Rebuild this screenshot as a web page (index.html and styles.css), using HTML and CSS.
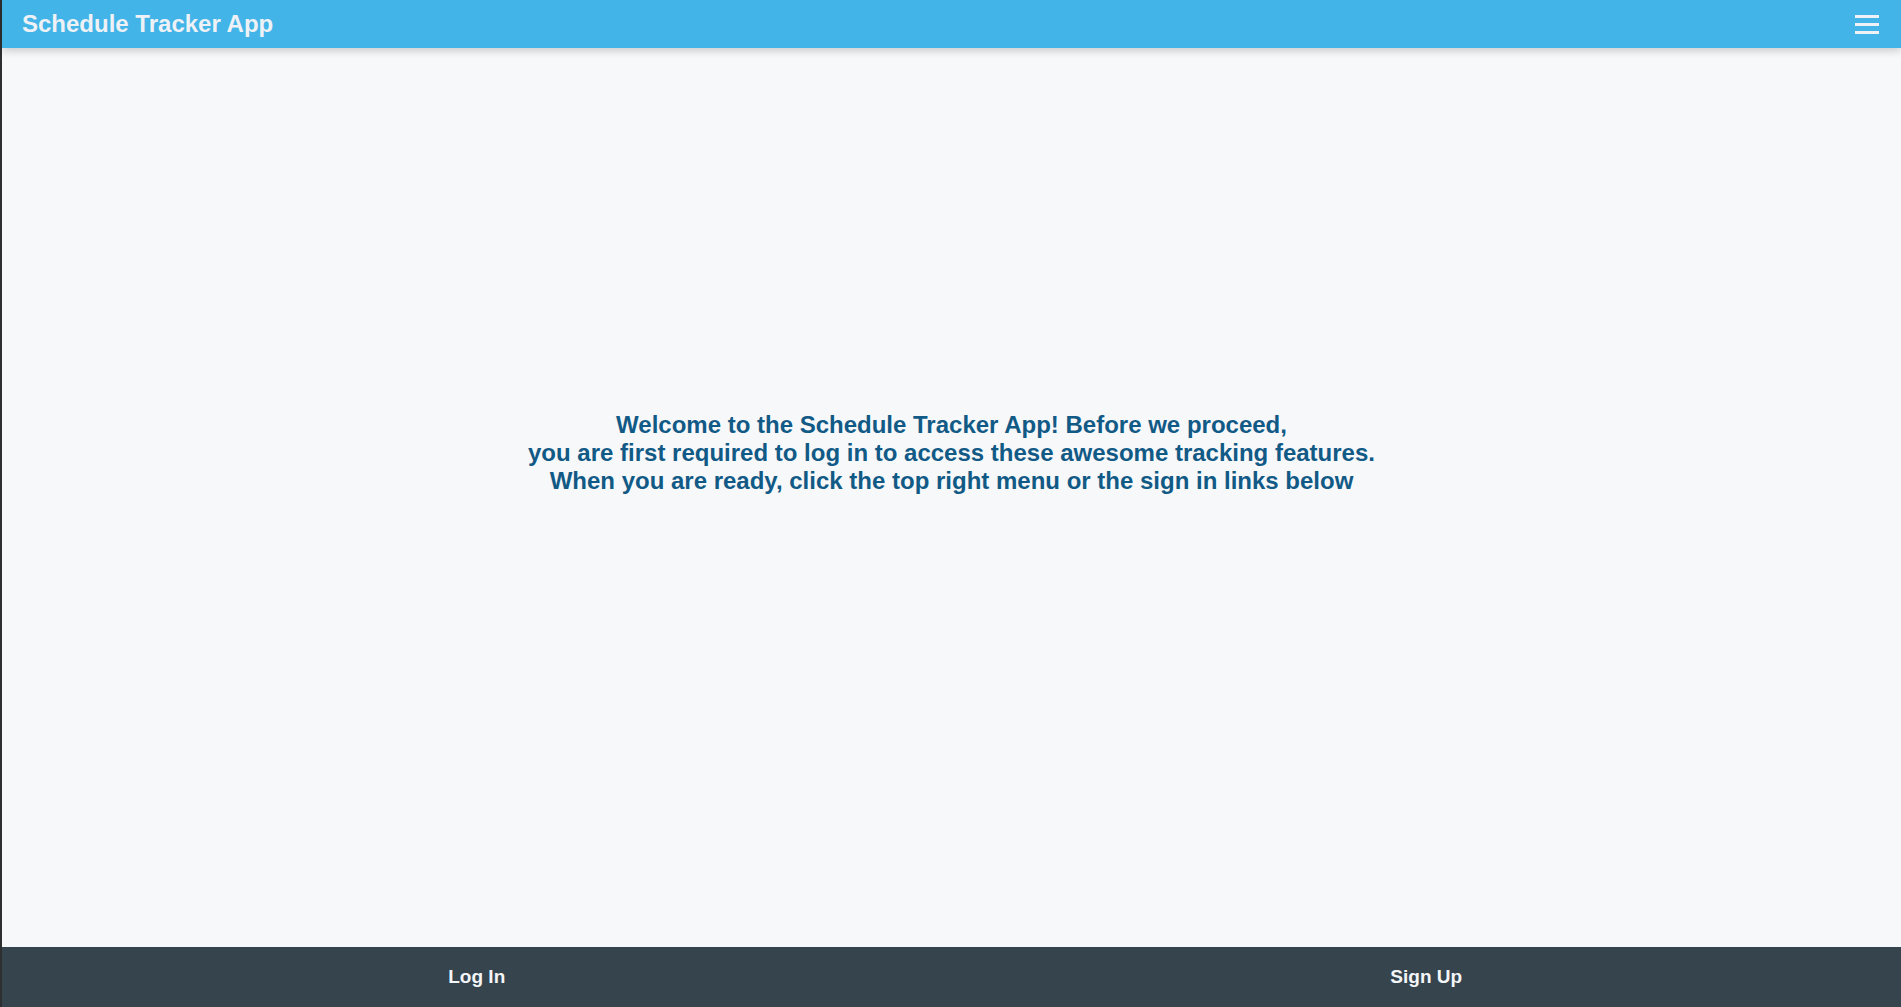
FILE: index.html
```html
<!DOCTYPE html>
<html>
<head>
<meta charset="utf-8">
<title>Schedule Tracker App</title>
<link rel="stylesheet" href="styles.css">
</head>
<body>
<div class="app">
  <header class="topbar">
    <div class="brand">Schedule Tracker App</div>
    <button class="menu" aria-label="menu">
      <span class="bar"></span><span class="bar"></span><span class="bar"></span>
    </button>
  </header>
  <main class="content">
    <p class="welcome">Welcome to the Schedule Tracker App! Before we proceed,<br>you are first required to log in to access these awesome tracking features.<br>When you are ready, click the top right menu or the sign in links below</p>
  </main>
  <footer class="footer">
    <a class="footlink" href="#">Log In</a>
    <a class="footlink" href="#">Sign Up</a>
  </footer>
</div>
</body>
</html>
```
FILE: styles.css
```css
html, body {
  margin: 0;
  padding: 0;
  height: 100%;
}
body {
  background: #2d2f31;
  font-family: "Liberation Sans", Arial, sans-serif;
}
.app {
  margin-left: 2px;
  height: 100%;
  display: flex;
  flex-direction: column;
  background: #f7f8fa;
}
.topbar {
  height: 48px;
  flex: 0 0 48px;
  background: #42b4e7;
  display: flex;
  align-items: center;
  justify-content: space-between;
  padding: 0 22px 0 20px;
  box-shadow: 0 3px 8px rgba(0,0,0,0.18);
  position: relative;
  z-index: 1;
}
.brand {
  color: #eef1f5;
  font-weight: bold;
  font-size: 24px;
}
.menu {
  background: none;
  border: 0;
  padding: 0;
  width: 24px;
  display: flex;
  flex-direction: column;
  gap: 5px;
  cursor: pointer;
}
.bar {
  display: block;
  height: 3px;
  width: 24px;
  background: #eef1f5;
}
.content {
  flex: 1;
  display: flex;
  align-items: center;
  justify-content: center;
}
.welcome {
  margin: 0 0 90px 0;
  text-align: center;
  color: #125a86;
  font-weight: bold;
  font-size: 24px;
  line-height: 28px;
}
.footer {
  height: 60px;
  flex: 0 0 60px;
  background: #36444e;
  display: flex;
}
.footlink {
  flex: 1;
  display: flex;
  align-items: center;
  justify-content: center;
  color: #f3f5f7;
  font-weight: bold;
  font-size: 19px;
  text-decoration: none;
}
```
